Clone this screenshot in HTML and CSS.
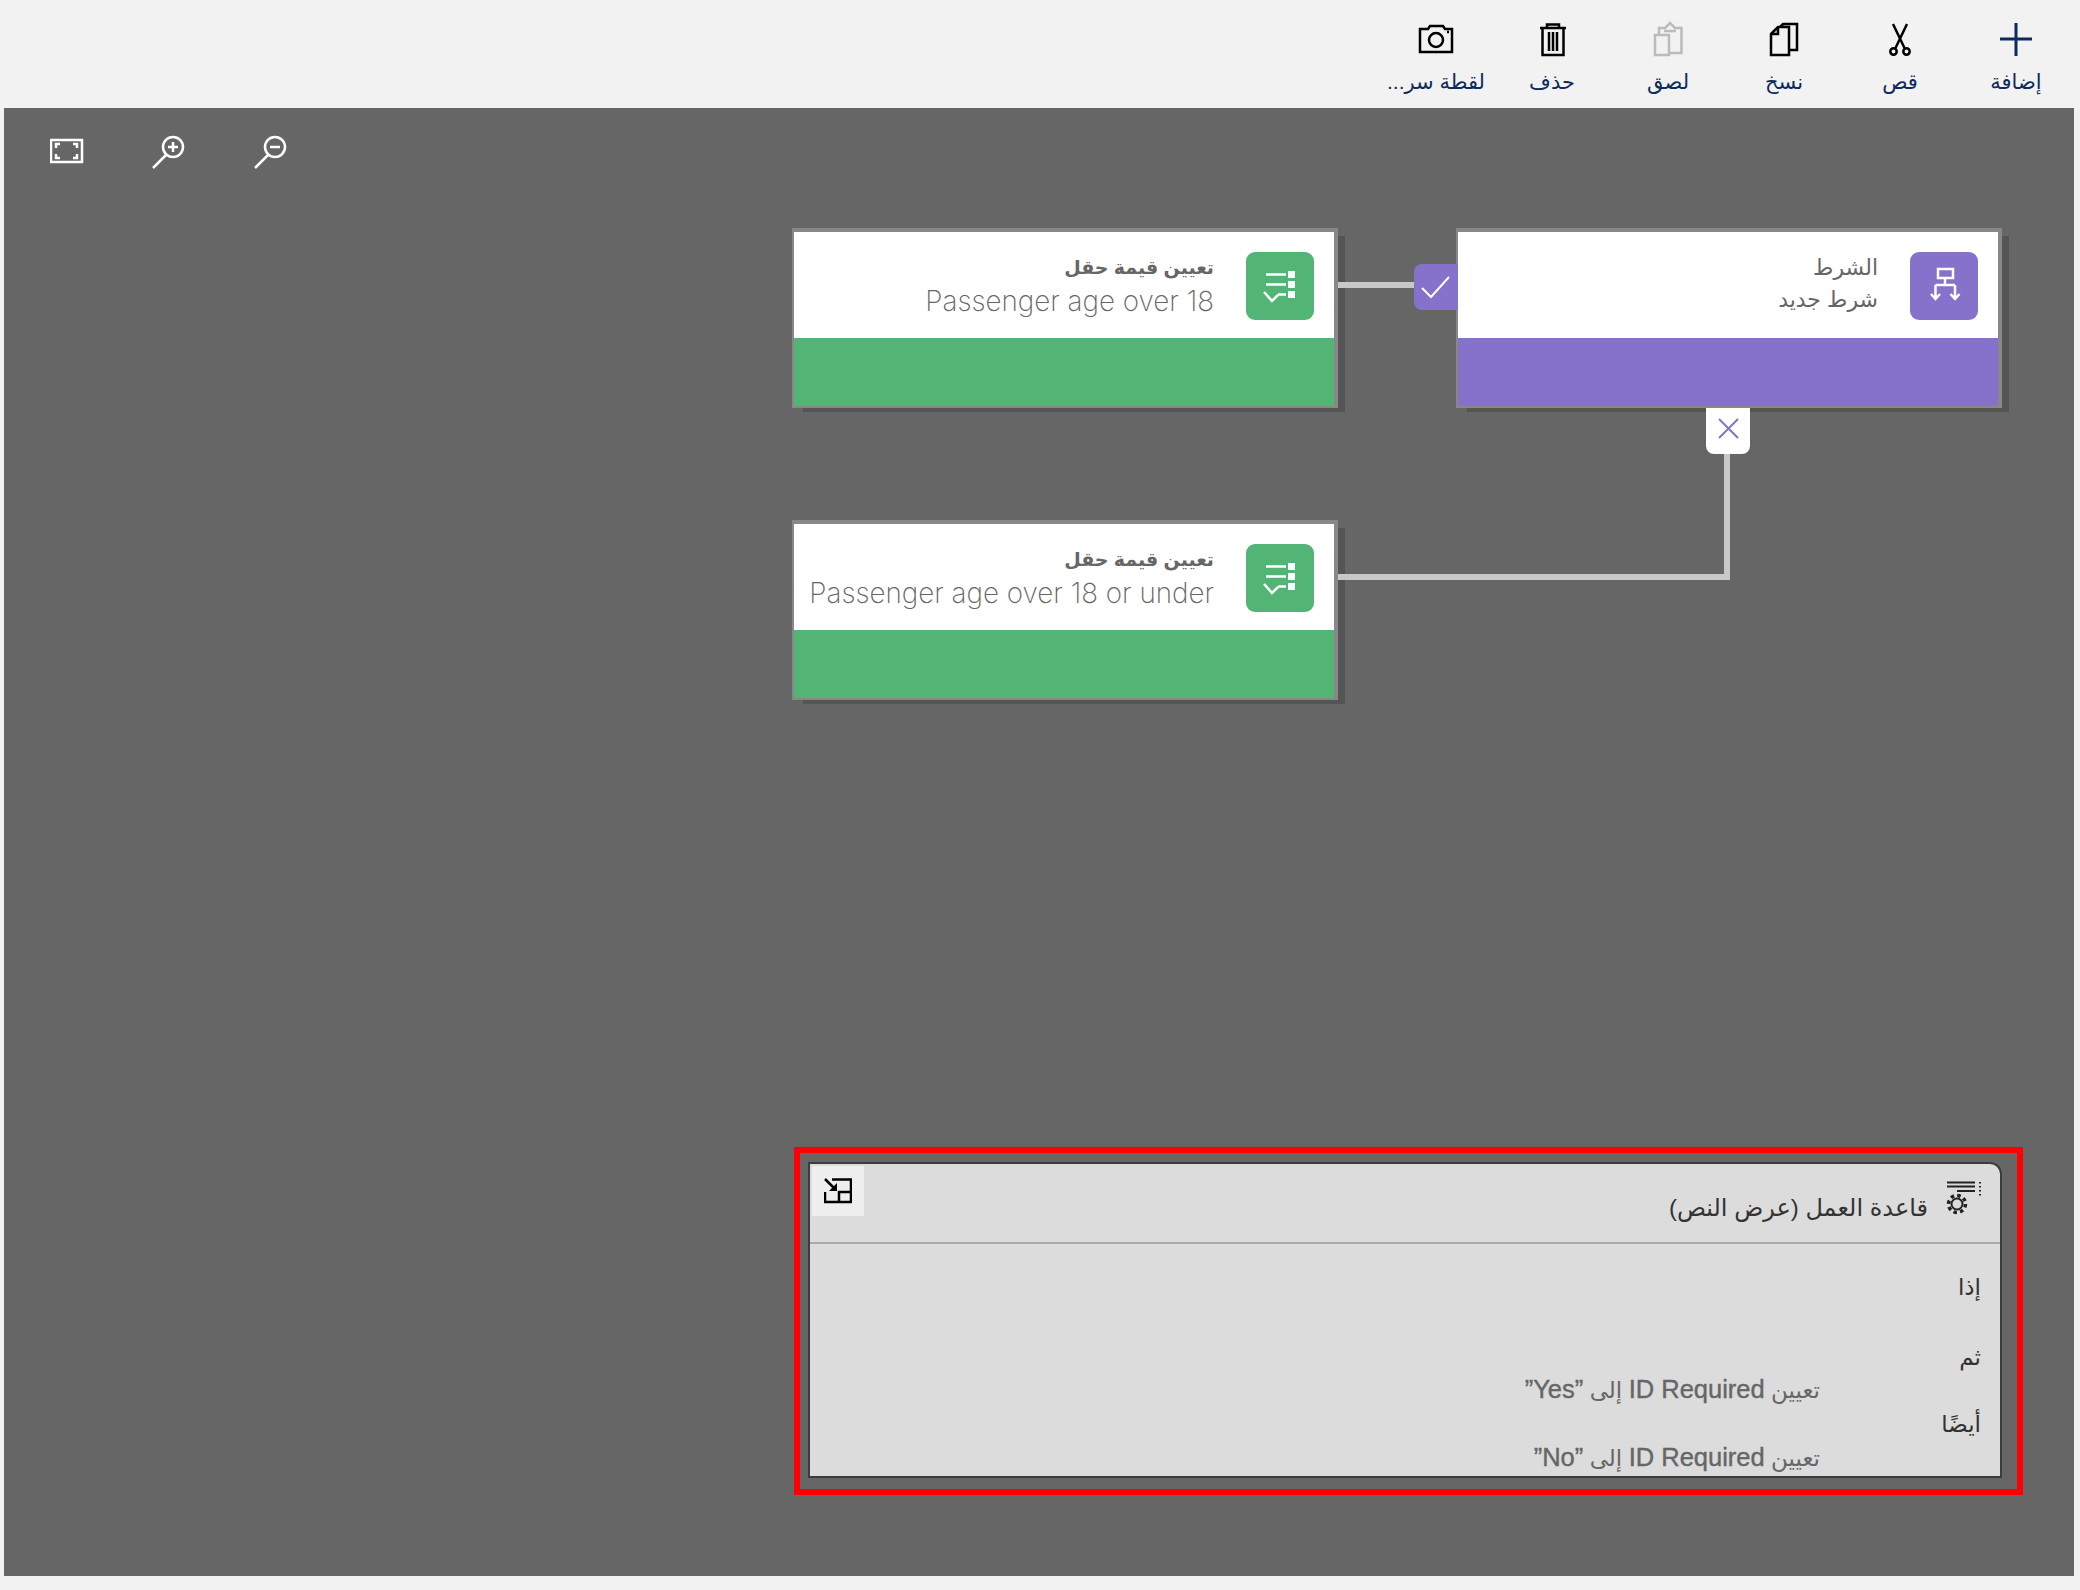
FILE: index.html
```html
<!DOCTYPE html>
<html lang="ar" dir="rtl">
<head>
    <title>قاعدة العمل</title>
    <meta name="viewport" content="width=device-width, initial-scale=1">
    <link rel="stylesheet" href="styles.css">
</head>
<body>
    <!-- Top command bar -->
    <div class="toolbar">
        <div class="tool">
            <svg class="tool-icon navy" viewBox="0 0 36 36"><path d="M2 18H34M18 2V35"/></svg>
            <span class="tool-label">إضافة</span>
        </div>
        <div class="tool">
            <svg class="tool-icon" viewBox="0 0 36 36"><path d="M11 3L22.5 27M25 3L13.5 27"/><circle cx="11.5" cy="30.5" r="3.2"/><circle cx="24.5" cy="30.5" r="3.2"/></svg>
            <span class="tool-label">قص</span>
        </div>
        <div class="tool">
            <svg class="tool-icon" viewBox="0 0 36 36"><path d="M5 13L12 6H23V34H5ZM5 13H12V6M14 6L17 3H31V29H23"/></svg>
            <span class="tool-label">نسخ</span>
        </div>
        <div class="tool">
            <svg class="tool-icon faded" viewBox="0 0 36 36"><path d="M9 13V7H15L20 2L25 7H31.500V32H19M5 14H19V34H5ZM14 10H26"/></svg>
            <span class="tool-label">لصق</span>
        </div>
        <div class="tool">
            <svg class="tool-icon" viewBox="0 0 36 36"><path d="M6 7H32M13 7V3.500H25V7M8.500 7V34H29.500V7M15 11V30M19 11V30M23 11V30"/></svg>
            <span class="tool-label">حذف</span>
        </div>
        <div class="tool">
            <svg class="tool-icon" viewBox="0 0 36 36"><path d="M2 8H10L12 5H25L27 8H34V31H2Z"/><circle cx="18" cy="19" r="7"/><path d="M29 11H31"/></svg>
            <span class="tool-label">لقطة سر...</span>
        </div>
    </div>

    <div class="canvas">
        <div class="view-tools">
            <svg class="view-icon" viewBox="0 0 34 34"><rect x="1" y="5" width="31" height="22"/><path d="M10 9H6V13M23 9H27V13M10 23H6V19M23 23H27V19"/></svg>
            <svg class="view-icon" viewBox="0 0 34 34"><circle cx="21" cy="12" r="10"/><path d="M14 20L1 33M16 12H26M21 7V17"/></svg>
            <svg class="view-icon" viewBox="0 0 34 34"><circle cx="21" cy="12" r="10"/><path d="M14 20L1 33M16 12H26"/></svg>
        </div>

        <div class="node node-set node-a">
            <div class="node-head">
                <div class="node-icon"><svg viewBox="0 0 68 68"><use href="#list-glyph"/></svg></div>
                <div class="node-text">
                    <div class="node-title">تعيين قيمة حقل</div>
                    <div class="node-sub">Passenger age over 18</div>
                </div>
            </div>
            <div class="node-foot"></div>
        </div>

        <div class="node node-if node-b">
            <div class="node-head">
                <div class="node-icon">
                    <svg viewBox="0 0 68 68"><path class="glyph" d="M28 17H43V26H28ZM35 26V33M25.500 33H45M25.500 33V47M45 33V47M21 42L25.500 47L30 42M40.500 42L45 47L49.500 42"/></svg>
                </div>
                <div class="node-text">
                    <div class="node-title plain">الشرط</div>
                    <div class="node-title plain">شرط جديد</div>
                </div>
            </div>
            <div class="node-foot"></div>
        </div>

        <div class="node node-set node-c">
            <div class="node-head">
                <div class="node-icon"><svg viewBox="0 0 68 68"><use href="#list-glyph"/></svg></div>
                <div class="node-text">
                    <div class="node-title">تعيين قيمة حقل</div>
                    <div class="node-sub">Passenger age over 18 or under</div>
                </div>
            </div>
            <div class="node-foot"></div>
        </div>

        <!-- Connectors -->
        <div class="wire wire-yes"></div>
        <div class="wire wire-no-down"></div>
        <div class="wire wire-no-across"></div>

        <div class="branch branch-yes">
            <svg viewBox="0 0 44 46"><path d="M8 24L17 33L35 13"/></svg>
        </div>
        <div class="branch branch-no">
            <svg viewBox="0 0 44 46"><path d="M13 11L32 30M32 11L13 30"/></svg>
        </div>

        <!-- Business rule panel, highlighted -->
        <div class="highlight">
            <div class="rule-panel">
                <div class="rule-head">
                    <svg class="rule-gear" viewBox="0 0 36 36">
                        <path d="M1 2.500H29M1 6.500H29M11 11H29M34 2V3.500M34 6V7.500M34 10V11.500M34 14V15.500"/>
                        <circle class="gear-teeth" cx="11" cy="24" r="8.500"/>
                        <circle cx="11" cy="24" r="5.500"/>
                    </svg>
                    <div class="rule-title">قاعدة العمل (عرض النص)</div>
                    <div class="rule-toggle">
                        <svg viewBox="0 0 28 26">
                            <path d="M8 1.500H27V24H1V14M15 24V14H27M1 1L10 10"/>
                            <polygon class="arrow-head" points="13,5 13,13 5,13"/>
                        </svg>
                    </div>
                </div>
                <div class="rule-body">
                    <div class="rule-word word-if">إذا</div>
                    <div class="rule-word word-then">ثم</div>
                    <div class="rule-action">تعيين <span class="latin">ID Required</span> إلى <span class="latin">”Yes”</span></div>
                    <div class="rule-word word-else">أيضًا</div>
                    <div class="rule-action action-last">تعيين <span class="latin">ID Required</span> إلى <span class="latin">”No”</span></div>
                </div>
            </div>
        </div>
    </div>

    <svg class="defs-only" aria-hidden="true">
        <defs>
            <g id="list-glyph">
                <path class="glyph" d="M20 22.500H40M20 32.500H40M32 42.500H40M18 40L26 49L32 43"/>
                <path class="glyph-fill" d="M42 19h7v7h-7zM42 29h7v7h-7zM42 39h7v7h-7z"/>
            </g>
        </defs>
    </svg>
</body>
</html>
```

FILE: styles.css
```css
html, body {
    margin: 0;
    padding: 0;
}
body {
    width: 2080px;
    height: 1590px;
    background-color: #f2f2f2;
    font-family: "Liberation Sans", "DejaVu Sans", sans-serif;
    overflow: hidden;
}
.defs-only {
    display: none;
}

/* toolbar */
.toolbar {
    display: flex;
    height: 108px;
    padding-right: 6px;
    box-sizing: border-box;
}
.tool {
    width: 116px;
    padding-top: 21px;
    display: flex;
    flex-direction: column;
    align-items: center;
}
.tool-icon {
    width: 36px;
    height: 36px;
    fill: none;
    stroke: #000;
    stroke-width: 2.5;
}
.tool-icon.navy {
    stroke: #0f2a5c;
    stroke-width: 3;
}
.tool-icon.faded {
    stroke: #bbb;
}
.tool-label {
    margin-top: 13px;
    font-size: 21px;
    line-height: 24px;
    color: #0f2a5c;
    white-space: nowrap;
}

/* canvas */
.canvas {
    position: relative;
    width: 2070px;
    height: 1468px;
    margin-right: 6px;
    background-color: #666;
}
.view-tools {
    display: flex;
    direction: ltr;
    padding: 27px 0 0 46px;
}
.view-icon {
    width: 34px;
    height: 34px;
    margin-right: 68px;
    fill: none;
    stroke: #fff;
    stroke-width: 2.5;
}

/* nodes */
.node {
    position: absolute;
    width: 546px;
    height: 180px;
    box-sizing: border-box;
    border-style: solid;
    border-color: #888;
    border-width: 4px 4px 2px 2px;
    box-shadow: 9px 6px 0 -2px #555;
}
.node-a { left: 788px; top: 120px; }
.node-b { left: 1452px; top: 120px; }
.node-c { left: 788px; top: 412px; }
.node-head {
    height: 106px;
    box-sizing: border-box;
    padding: 20px 20px 0 0;
    display: flex;
    background-color: #fff;
}
.node-foot {
    height: 68px;
}
.node-set .node-foot, .node-set .node-icon {
    background-color: #52b575;
}
.node-if .node-foot, .node-if .node-icon {
    background-color: #8672cb;
}
.node-icon {
    width: 68px;
    height: 68px;
    border-radius: 9px;
    flex: none;
}
.node-icon svg {
    display: block;
    width: 68px;
    height: 68px;
}
.glyph {
    fill: none;
    stroke: #fff;
    stroke-width: 2.5;
}
.glyph-fill {
    fill: #fff;
}
.node-text {
    margin-right: 32px;
    color: #666;
}
.node-title {
    font-size: 19px;
    line-height: 32px;
    font-weight: bold;
}
.node-title.plain {
    font-size: 22px;
    font-weight: normal;
}
.node-sub {
    font-family: "Inter", sans-serif;
    font-weight: 200;
    font-size: 27.800px;
    line-height: 34px;
    direction: ltr;
    text-align: right;
}

/* connectors */
.wire {
    position: absolute;
    background-color: #c8c8c8;
}
.wire-yes { left: 1334px; top: 174px; width: 80px; height: 6px; }
.wire-no-down { left: 1720px; top: 340px; width: 6px; height: 132px; }
.wire-no-across { left: 1334px; top: 466px; width: 392px; height: 6px; }

.branch {
    position: absolute;
}
.branch svg {
    display: block;
    width: 44px;
    height: 46px;
    fill: none;
    stroke-width: 2;
}
.branch-yes {
    left: 1410px;
    top: 156px;
    background-color: #8672cb;
    border-radius: 8px 0 0 8px;
    stroke: #fff;
}
.branch-no {
    left: 1702px;
    top: 300px;
    background-color: #fff;
    border-radius: 0 0 8px 8px;
    stroke: #8672cb;
}

/* business rule */
.highlight {
    position: absolute;
    left: 790px;
    top: 1039px;
    width: 1229px;
    height: 348px;
    box-sizing: border-box;
    border: 6px solid #f00;
    padding: 9px 15px 11px 8px;
}
.rule-panel {
    height: 100%;
    box-sizing: border-box;
    border: 2px solid #3c3c3c;
    border-top-right-radius: 12px;
    background-color: #dcdcdc;
}
.rule-head {
    position: relative;
    display: flex;
    height: 80px;
    box-sizing: border-box;
    border-bottom: 2px solid #aaa;
    padding: 16px 18px 0 0;
}
.rule-gear {
    width: 36px;
    height: 36px;
    flex: none;
    fill: none;
    stroke: #222;
    stroke-width: 2;
}
.rule-gear .gear-teeth {
    stroke-width: 3.5;
    stroke-dasharray: 3.500 3.170;
}
.rule-title {
    margin-right: 18px;
    padding-top: 12px;
    font-size: 24px;
    line-height: 32px;
    color: #333;
}
.rule-toggle {
    position: absolute;
    left: 2px;
    top: 2px;
    width: 52px;
    height: 50px;
    background-color: #eee;
    display: flex;
    align-items: center;
    justify-content: center;
}
.rule-toggle svg {
    width: 28px;
    height: 26px;
    fill: none;
    stroke: #000;
    stroke-width: 2.5;
}
.rule-toggle .arrow-head {
    fill: #000;
    stroke: none;
}
.rule-body {
    padding-right: 19px;
}
.rule-word {
    font-size: 23px;
    line-height: 32px;
    color: #333;
}
.word-if { padding-top: 27px; }
.word-then { padding-top: 38px; }
.word-else { padding-top: 2px; }
.rule-action {
    padding-right: 161px;
    font-size: 23px;
    line-height: 32px;
    color: #666;
}
.rule-action .latin {
    font-size: 25.500px;
    -webkit-text-stroke: 0.4px #666;
}
.action-last {
    padding-top: 1px;
}
```
